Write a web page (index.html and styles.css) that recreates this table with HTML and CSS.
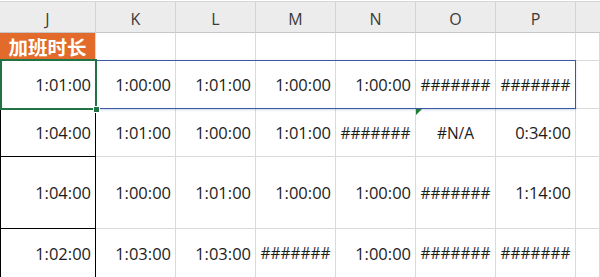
FILE: index.html
```html
<!DOCTYPE html>
<html>
<head>
<meta charset="utf-8">
<link rel="stylesheet" href="styles.css">
</head>
<body>
<div class="sheet">
  <div class="grid">
    <div class="hd">J</div><div class="hd">K</div><div class="hd">L</div><div class="hd">M</div><div class="hd">N</div><div class="hd">O</div><div class="hd">P</div><div class="hd last"></div>

    <div class="c title">加班时长</div><div class="c"></div><div class="c"></div><div class="c"></div><div class="c"></div><div class="c"></div><div class="c"></div><div class="c"></div>

    <div class="c n">1:01:00</div><div class="c n">1:00:00</div><div class="c n">1:01:00</div><div class="c n">1:00:00</div><div class="c n">1:00:00</div><div class="c h">#######</div><div class="c h">#######</div><div class="c"></div>

    <div class="c n bx">1:04:00</div><div class="c n">1:01:00</div><div class="c n">1:00:00</div><div class="c n">1:01:00</div><div class="c h">#######</div><div class="c h">#N/A</div><div class="c n">0:34:00</div><div class="c"></div>

    <div class="c n bx">1:04:00</div><div class="c n">1:00:00</div><div class="c n">1:01:00</div><div class="c n">1:00:00</div><div class="c n">1:00:00</div><div class="c h">#######</div><div class="c n">1:14:00</div><div class="c"></div>

    <div class="c n bx bl">1:02:00</div><div class="c n">1:03:00</div><div class="c n">1:03:00</div><div class="c h">#######</div><div class="c n">1:00:00</div><div class="c h">#######</div><div class="c h">#######</div><div class="c"></div>
  </div>
  <div class="sel-range"></div>
  <div class="sel-active"></div>
  <div class="handle"></div>
  <div class="err"></div>
</div>
</body>
</html>
```
FILE: styles.css
```css
html, body {
  margin: 0;
  padding: 0;
  background: #ffffff;
}
.sheet {
  position: relative;
  width: 600px;
  height: 277px;
  overflow: hidden;
  font-family: "Open Sans", "Noto Sans CJK SC", sans-serif;
  color: #1c1c1c;
}
.grid {
  display: grid;
  grid-template-columns: 96px 80px 80px 80px 80px 80px 80px 24px;
  grid-template-rows: 32px 28px 48px 48px 72px 49px;
  padding-top: 1px;
}
.hd {
  background: #ececec;
  border-top: 1px solid #d6d6d6;
  border-bottom: 1px solid #c6c6c6;
  border-right: 1px solid #d4d4d4;
  box-sizing: border-box;
  display: flex;
  align-items: center;
  justify-content: center;
  font-size: 16px;
  color: #3a3a3a;
  padding-top: 3px;
}
.hd.last {
  border-right: none;
}
.c {
  box-sizing: border-box;
  border-right: 1px solid #dadada;
  border-bottom: 1px solid #dadada;
  display: flex;
  align-items: center;
  font-size: 16.5px;
  white-space: nowrap;
  overflow: hidden;
}
.n {
  justify-content: flex-end;
  padding-right: 4px;
}
.h {
  justify-content: center;
  font-size: 15.5px;
}
.title {
  font-family: "Noto Sans CJK SC", sans-serif;
  background: #e26b2b;
  color: #ffffff;
  font-weight: bold;
  font-size: 19.5px;
  justify-content: center;
  border-bottom: 2px solid #ffffff;
}
.bx {
  border-left: 1px solid #000000;
  border-right: 1px solid #000000;
  border-bottom: 1px solid #000000;
}
.bl {
  border-bottom: 1px solid #000000;
}
.sel-range {
  position: absolute;
  left: 96px;
  top: 60px;
  width: 480px;
  height: 49px;
  box-sizing: border-box;
  border: 1px solid #3d57a4;
  box-shadow: 0 1px 2px rgba(61, 87, 164, 0.25);
}
.sel-active {
  position: absolute;
  left: 0;
  top: 59px;
  width: 97px;
  height: 51px;
  box-sizing: border-box;
  border: 2px solid #217346;
}
.handle {
  position: absolute;
  left: 93px;
  top: 106px;
  width: 5px;
  height: 5px;
  background: #217346;
  border: 1px solid #ffffff;
}
.err {
  position: absolute;
  left: 416px;
  top: 109px;
  width: 0;
  height: 0;
  border-top: 6px solid #1e7b33;
  border-right: 6px solid transparent;
}
```
